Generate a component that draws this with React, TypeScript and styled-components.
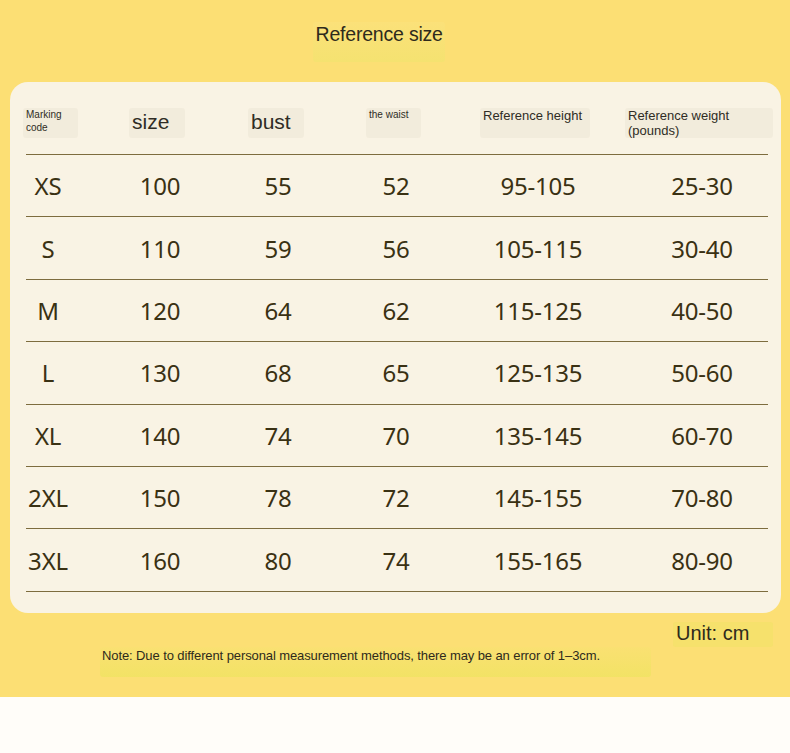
import React from "react";
import styled, { createGlobalStyle } from "styled-components";

const GlobalStyle = createGlobalStyle`
  html, body {
    margin: 0;
    padding: 0;
    background: #fffdf9;
  }
  * { box-sizing: border-box; }
`;

const Page = styled.div`
  width: 790px;
  height: 753px;
  background: #fffdf9;
`;

const Yellow = styled.div`
  background: #fcdf74;
  height: 697px;
  padding: 22px 9px 0 10px;
  display: flex;
  flex-direction: column;
`;

const TitleRow = styled.div`
  display: flex;
  justify-content: center;
  height: 60px;
  padding-right: 34px;
`;

const Highlight = styled.span`
  display: inline-block;
  vertical-align: top;
  border-radius: 3px;
  white-space: nowrap;
`;

const Title = styled(Highlight)`
  font-family: "Liberation Sans", Arial, sans-serif;
  font-size: 19.5px;
  color: #2e2a1c;
  width: 132px;
  height: 40px;
  padding: 1px 0 0 3px;
  letter-spacing: -0.2px;
  background: linear-gradient(
    to bottom,
    rgba(250, 228, 130, 0.4) 0%,
    rgba(240, 228, 110, 0.6) 100%
  );
`;

const Card = styled.div`
  background: #f9f3e4;
  border-radius: 18px;
  height: 531px;
  padding: 0 13px 0 16px;
`;

const HeaderRow = styled.div`
  display: grid;
  grid-template-columns: 106px 119px 118px 114px 145px 140px;
  height: 73px;
  padding-top: 26px;
  border-bottom: 1.5px solid #7d6c3e;
`;

const HeadLabel = styled(Highlight)<{ $size: number; $w: number }>`
  font-family: "Liberation Sans", Arial, sans-serif;
  font-size: ${(p) => p.$size}px;
  line-height: ${(p) => (p.$size > 15 ? 28 : p.$size > 11 ? 15 : 13)}px;
  color: #2f2c25;
  width: ${(p) => p.$w}px;
  height: 30px;
  margin-left: -3px;
  padding: 0 3px;
  background: rgba(228, 220, 200, 0.28);
`;

const DataRow = styled.div`
  display: grid;
  grid-template-columns: 44px 180px 56px 180px 104px 1fr;
  height: 62.4px;
  align-items: center;
  border-bottom: 1.5px solid #7d6c3e;
`;

const Cell = styled.div<{ $shift?: number }>`
  font-family: "Noto Sans", "Open Sans", sans-serif;
  font-size: 24px;
  color: #3a3113;
  text-align: center;
  white-space: nowrap;
  padding-left: ${(p) => p.$shift || 0}px;
  letter-spacing: -0.2px;
`;

const Footer = styled.div`
  display: flex;
  flex-direction: column;
  align-items: flex-end;
  padding-top: 9px;
`;

const Unit = styled(Highlight)`
  font-family: "Liberation Sans", Arial, sans-serif;
  font-size: 20px;
  color: #2e2a1c;
  width: 100px;
  height: 25px;
  padding: 0 0 0 3px;
  margin-right: 8px;
  background: rgba(240, 228, 100, 0.5);
`;

const Note = styled(Highlight)`
  align-self: flex-start;
  margin-left: 90px;
  font-family: "Liberation Sans", Arial, sans-serif;
  font-size: 13px;
  color: #2e2a1c;
  width: 551px;
  height: 30px;
  padding: 1px 0 0 2px;
  letter-spacing: -0.1px;
  background: linear-gradient(
    to bottom,
    rgba(245, 228, 110, 0.3) 0%,
    rgba(238, 228, 95, 0.7) 100%
  );
`;

const headers = [
  { text: "Marking\ncode", size: 10, w: 55 },
  { text: "size", size: 21, w: 56 },
  { text: "bust", size: 21, w: 56 },
  { text: "the waist", size: 10, w: 55 },
  { text: "Reference height", size: 13, w: 110 },
  { text: "Reference weight\n(pounds)", size: 13, w: 148 },
];

const rows = [
  ["XS", "100", "55", "52", "95-105", "25-30"],
  ["S", "110", "59", "56", "105-115", "30-40"],
  ["M", "120", "64", "62", "115-125", "40-50"],
  ["L", "130", "68", "65", "125-135", "50-60"],
  ["XL", "140", "74", "70", "135-145", "60-70"],
  ["2XL", "150", "78", "72", "145-155", "70-80"],
  ["3XL", "160", "80", "74", "155-165", "80-90"],
];

const Lines = ({ text }: { text: string }) => (
  <>
    {text.split("\n").map((t, i) => (
      <div key={i}>{t}</div>
    ))}
  </>
);

export default function App() {
  return (
    <Page>
      <GlobalStyle />
      <Yellow>
        <TitleRow>
          <Title>Reference size</Title>
        </TitleRow>
        <Card>
          <HeaderRow>
            {headers.map((h) => (
              <div key={h.text}>
                <HeadLabel $size={h.size} $w={h.w}>
                  <Lines text={h.text} />
                </HeadLabel>
              </div>
            ))}
          </HeaderRow>
          {rows.map((r) => (
            <DataRow key={r[0]}>
              {r.map((c, i) => (
                <Cell key={i} $shift={i === 5 ? 46 : 0}>
                  {c}
                </Cell>
              ))}
            </DataRow>
          ))}
        </Card>
        <Footer>
          <Unit>Unit: cm</Unit>
          <Note>
            Note: Due to different personal measurement methods, there may be an error of 1–3cm.
          </Note>
        </Footer>
      </Yellow>
    </Page>
  );
}
